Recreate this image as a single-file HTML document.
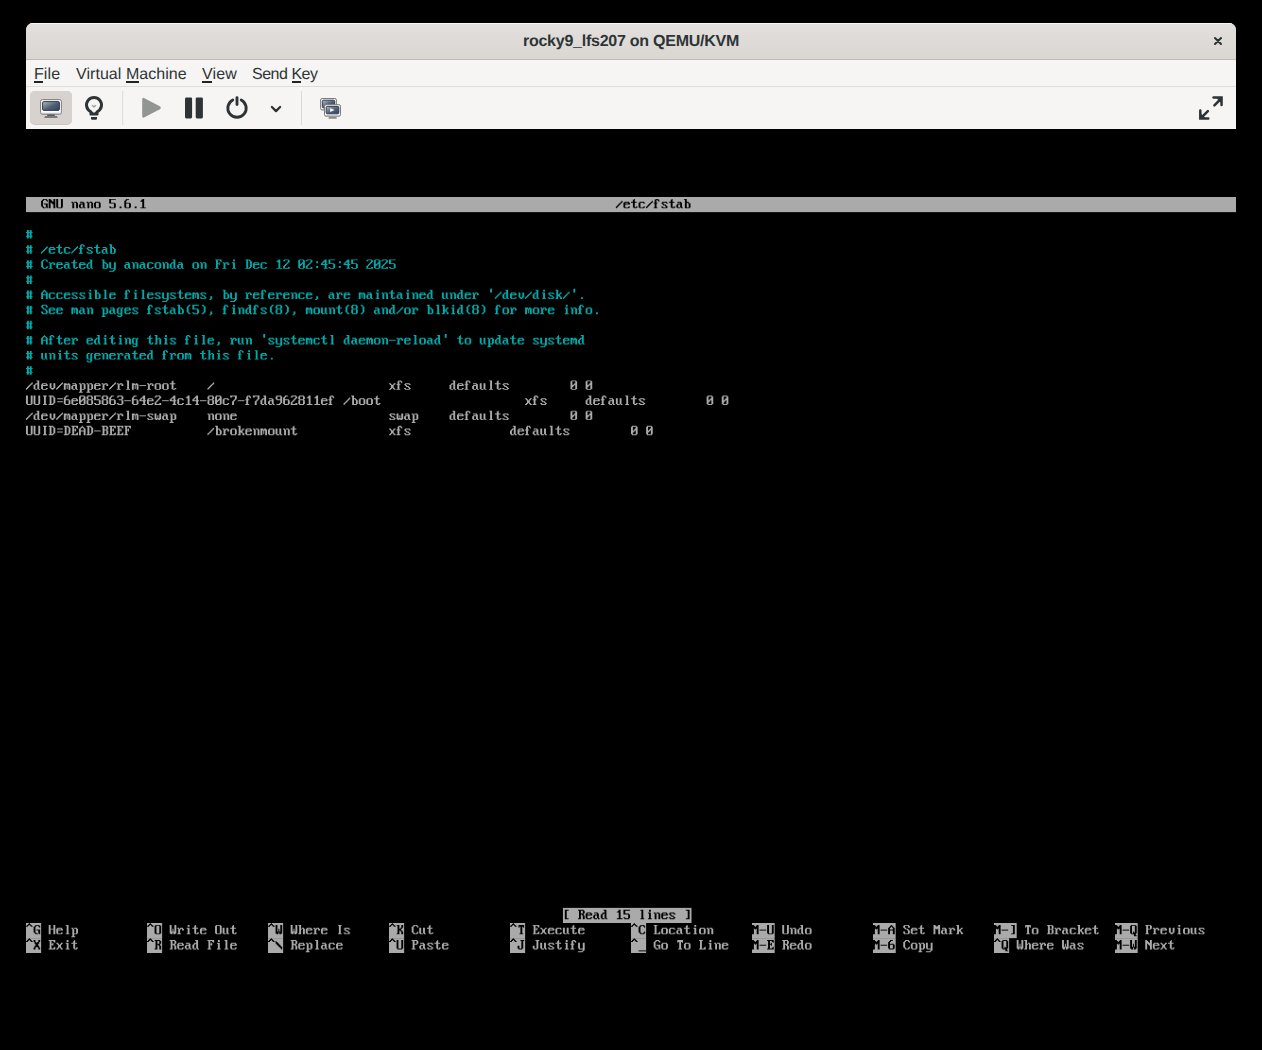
<!DOCTYPE html>
<html><head><meta charset="utf-8">
<style>
html,body{margin:0;padding:0;background:#000;width:1262px;height:1050px;overflow:hidden;}
body{position:relative;font-family:"Liberation Sans",sans-serif;}
.win{position:absolute;left:26px;top:23px;width:1210px;height:106px;background:#f6f5f4;border-radius:7px 7px 0 0;overflow:hidden;}
.title{position:absolute;left:0;top:0;width:1210px;height:36px;background:linear-gradient(#e2dfdc,#dad7d3);border-bottom:1px solid #bfbab3;box-shadow:inset 0 1px rgba(255,255,255,0.75);}
.title .t{position:absolute;left:0;width:1210px;top:10px;text-align:center;font-weight:bold;font-size:16px;text-rendering:geometricPrecision;letter-spacing:-0.25px;color:#2e3436;}
.menu{position:absolute;left:0;top:37px;width:1210px;height:26px;border-bottom:1px solid #dedcd9;}
.menu span{position:absolute;top:6px;font-size:16px;text-rendering:geometricPrecision;color:#2e3436;white-space:nowrap;}
#term{position:absolute;left:26px;top:197px;}
</style></head><body>
<div class="win">
  <div class="title"><div class="t">rocky9_lfs207 on QEMU/KVM</div>
  </div>
  <div class="menu">
    <span style="left:8px;letter-spacing:0.1px">File</span>
    <span style="left:50px;letter-spacing:0.05px">Virtual Machine</span>
    <span style="left:176px;letter-spacing:0.1px">View</span>
    <span style="left:226px;letter-spacing:-0.48px">Send Key</span>
  </div>
</div>
<svg id="term" width="1210" height="756.25" viewBox="0 0 1280 800"><defs><path id="g35" d="M1 3h2v1h-2zM4 3h2v1h-2zM1 4h2v1h-2zM4 4h2v1h-2zM0 5h7v1h-7zM1 6h2v1h-2zM4 6h2v1h-2zM1 7h2v1h-2zM4 7h2v1h-2zM1 8h2v1h-2zM4 8h2v1h-2zM0 9h7v1h-7zM1 10h2v1h-2zM4 10h2v1h-2zM1 11h2v1h-2zM4 11h2v1h-2z"/><path id="g39" d="M3 1h2v1h-2zM3 2h2v1h-2zM3 3h2v1h-2zM3 4h2v1h-2z"/><path id="g40" d="M4 2h2v1h-2zM3 3h2v1h-2zM2 4h2v1h-2zM2 5h2v1h-2zM2 6h2v1h-2zM2 7h2v1h-2zM2 8h2v1h-2zM2 9h2v1h-2zM3 10h2v1h-2zM4 11h2v1h-2z"/><path id="g41" d="M2 2h2v1h-2zM3 3h2v1h-2zM4 4h2v1h-2zM4 5h2v1h-2zM4 6h2v1h-2zM4 7h2v1h-2zM4 8h2v1h-2zM4 9h2v1h-2zM3 10h2v1h-2zM2 11h2v1h-2z"/><path id="g44" d="M3 9h2v1h-2zM3 10h2v1h-2zM3 11h2v1h-2zM2 12h2v1h-2z"/><path id="g45" d="M0 7h7v1h-7z"/><path id="g46" d="M3 10h2v1h-2zM3 11h2v1h-2z"/><path id="g47" d="M6 4h1v1h-1zM5 5h2v1h-2zM4 6h2v1h-2zM3 7h2v1h-2zM2 8h2v1h-2zM1 9h2v1h-2zM0 10h2v1h-2zM0 11h1v1h-1z"/><path id="g48" d="M1 2h5v1h-5zM0 3h2v1h-2zM5 3h2v1h-2zM0 4h2v1h-2zM5 4h2v1h-2zM0 5h2v1h-2zM4 5h3v1h-3zM0 6h2v1h-2zM3 6h4v1h-4zM0 7h4v1h-4zM5 7h2v1h-2zM0 8h3v1h-3zM5 8h2v1h-2zM0 9h2v1h-2zM5 9h2v1h-2zM0 10h2v1h-2zM5 10h2v1h-2zM1 11h5v1h-5z"/><path id="g49" d="M3 2h2v1h-2zM2 3h3v1h-3zM1 4h4v1h-4zM3 5h2v1h-2zM3 6h2v1h-2zM3 7h2v1h-2zM3 8h2v1h-2zM3 9h2v1h-2zM3 10h2v1h-2zM1 11h6v1h-6z"/><path id="g50" d="M1 2h5v1h-5zM0 3h2v1h-2zM5 3h2v1h-2zM5 4h2v1h-2zM4 5h2v1h-2zM3 6h2v1h-2zM2 7h2v1h-2zM1 8h2v1h-2zM0 9h2v1h-2zM0 10h2v1h-2zM5 10h2v1h-2zM0 11h7v1h-7z"/><path id="g51" d="M1 2h5v1h-5zM0 3h2v1h-2zM5 3h2v1h-2zM5 4h2v1h-2zM5 5h2v1h-2zM2 6h4v1h-4zM5 7h2v1h-2zM5 8h2v1h-2zM5 9h2v1h-2zM0 10h2v1h-2zM5 10h2v1h-2zM1 11h5v1h-5z"/><path id="g52" d="M4 2h2v1h-2zM3 3h3v1h-3zM2 4h4v1h-4zM1 5h2v1h-2zM4 5h2v1h-2zM0 6h2v1h-2zM4 6h2v1h-2zM0 7h7v1h-7zM4 8h2v1h-2zM4 9h2v1h-2zM4 10h2v1h-2zM3 11h4v1h-4z"/><path id="g53" d="M0 2h7v1h-7zM0 3h2v1h-2zM0 4h2v1h-2zM0 5h2v1h-2zM0 6h6v1h-6zM5 7h2v1h-2zM5 8h2v1h-2zM5 9h2v1h-2zM0 10h2v1h-2zM5 10h2v1h-2zM1 11h5v1h-5z"/><path id="g54" d="M2 2h3v1h-3zM1 3h2v1h-2zM0 4h2v1h-2zM0 5h2v1h-2zM0 6h6v1h-6zM0 7h2v1h-2zM5 7h2v1h-2zM0 8h2v1h-2zM5 8h2v1h-2zM0 9h2v1h-2zM5 9h2v1h-2zM0 10h2v1h-2zM5 10h2v1h-2zM1 11h5v1h-5z"/><path id="g55" d="M0 2h7v1h-7zM0 3h2v1h-2zM5 3h2v1h-2zM5 4h2v1h-2zM5 5h2v1h-2zM4 6h2v1h-2zM3 7h2v1h-2zM2 8h2v1h-2zM2 9h2v1h-2zM2 10h2v1h-2zM2 11h2v1h-2z"/><path id="g56" d="M1 2h5v1h-5zM0 3h2v1h-2zM5 3h2v1h-2zM0 4h2v1h-2zM5 4h2v1h-2zM0 5h2v1h-2zM5 5h2v1h-2zM1 6h5v1h-5zM0 7h2v1h-2zM5 7h2v1h-2zM0 8h2v1h-2zM5 8h2v1h-2zM0 9h2v1h-2zM5 9h2v1h-2zM0 10h2v1h-2zM5 10h2v1h-2zM1 11h5v1h-5z"/><path id="g57" d="M1 2h5v1h-5zM0 3h2v1h-2zM5 3h2v1h-2zM0 4h2v1h-2zM5 4h2v1h-2zM0 5h2v1h-2zM5 5h2v1h-2zM1 6h6v1h-6zM5 7h2v1h-2zM5 8h2v1h-2zM5 9h2v1h-2zM4 10h2v1h-2zM1 11h4v1h-4z"/><path id="g58" d="M3 4h2v1h-2zM3 5h2v1h-2zM3 9h2v1h-2zM3 10h2v1h-2z"/><path id="g61" d="M1 5h6v1h-6zM1 8h6v1h-6z"/><path id="g65" d="M3 2h1v1h-1zM2 3h3v1h-3zM1 4h2v1h-2zM4 4h2v1h-2zM0 5h2v1h-2zM5 5h2v1h-2zM0 6h2v1h-2zM5 6h2v1h-2zM0 7h7v1h-7zM0 8h2v1h-2zM5 8h2v1h-2zM0 9h2v1h-2zM5 9h2v1h-2zM0 10h2v1h-2zM5 10h2v1h-2zM0 11h2v1h-2zM5 11h2v1h-2z"/><path id="g66" d="M0 2h6v1h-6zM1 3h2v1h-2zM5 3h2v1h-2zM1 4h2v1h-2zM5 4h2v1h-2zM1 5h2v1h-2zM5 5h2v1h-2zM1 6h5v1h-5zM1 7h2v1h-2zM5 7h2v1h-2zM1 8h2v1h-2zM5 8h2v1h-2zM1 9h2v1h-2zM5 9h2v1h-2zM1 10h2v1h-2zM5 10h2v1h-2zM0 11h6v1h-6z"/><path id="g67" d="M2 2h4v1h-4zM1 3h2v1h-2zM5 3h2v1h-2zM0 4h2v1h-2zM6 4h1v1h-1zM0 5h2v1h-2zM0 6h2v1h-2zM0 7h2v1h-2zM0 8h2v1h-2zM0 9h2v1h-2zM6 9h1v1h-1zM1 10h2v1h-2zM5 10h2v1h-2zM2 11h4v1h-4z"/><path id="g68" d="M0 2h5v1h-5zM1 3h2v1h-2zM4 3h2v1h-2zM1 4h2v1h-2zM5 4h2v1h-2zM1 5h2v1h-2zM5 5h2v1h-2zM1 6h2v1h-2zM5 6h2v1h-2zM1 7h2v1h-2zM5 7h2v1h-2zM1 8h2v1h-2zM5 8h2v1h-2zM1 9h2v1h-2zM5 9h2v1h-2zM1 10h2v1h-2zM4 10h2v1h-2zM0 11h5v1h-5z"/><path id="g69" d="M0 2h7v1h-7zM1 3h2v1h-2zM5 3h2v1h-2zM1 4h2v1h-2zM6 4h1v1h-1zM1 5h2v1h-2zM4 5h1v1h-1zM1 6h4v1h-4zM1 7h2v1h-2zM4 7h1v1h-1zM1 8h2v1h-2zM1 9h2v1h-2zM6 9h1v1h-1zM1 10h2v1h-2zM5 10h2v1h-2zM0 11h7v1h-7z"/><path id="g70" d="M0 2h7v1h-7zM1 3h2v1h-2zM5 3h2v1h-2zM1 4h2v1h-2zM6 4h1v1h-1zM1 5h2v1h-2zM4 5h1v1h-1zM1 6h4v1h-4zM1 7h2v1h-2zM4 7h1v1h-1zM1 8h2v1h-2zM1 9h2v1h-2zM1 10h2v1h-2zM0 11h4v1h-4z"/><path id="g71" d="M2 2h4v1h-4zM1 3h2v1h-2zM5 3h2v1h-2zM0 4h2v1h-2zM6 4h1v1h-1zM0 5h2v1h-2zM0 6h2v1h-2zM0 7h2v1h-2zM3 7h4v1h-4zM0 8h2v1h-2zM5 8h2v1h-2zM0 9h2v1h-2zM5 9h2v1h-2zM1 10h2v1h-2zM5 10h2v1h-2zM2 11h3v1h-3zM6 11h1v1h-1z"/><path id="g72" d="M0 2h2v1h-2zM5 2h2v1h-2zM0 3h2v1h-2zM5 3h2v1h-2zM0 4h2v1h-2zM5 4h2v1h-2zM0 5h2v1h-2zM5 5h2v1h-2zM0 6h7v1h-7zM0 7h2v1h-2zM5 7h2v1h-2zM0 8h2v1h-2zM5 8h2v1h-2zM0 9h2v1h-2zM5 9h2v1h-2zM0 10h2v1h-2zM5 10h2v1h-2zM0 11h2v1h-2zM5 11h2v1h-2z"/><path id="g73" d="M2 2h4v1h-4zM3 3h2v1h-2zM3 4h2v1h-2zM3 5h2v1h-2zM3 6h2v1h-2zM3 7h2v1h-2zM3 8h2v1h-2zM3 9h2v1h-2zM3 10h2v1h-2zM2 11h4v1h-4z"/><path id="g74" d="M3 2h4v1h-4zM4 3h2v1h-2zM4 4h2v1h-2zM4 5h2v1h-2zM4 6h2v1h-2zM4 7h2v1h-2zM0 8h2v1h-2zM4 8h2v1h-2zM0 9h2v1h-2zM4 9h2v1h-2zM0 10h2v1h-2zM4 10h2v1h-2zM1 11h4v1h-4z"/><path id="g75" d="M0 2h3v1h-3zM5 2h2v1h-2zM1 3h2v1h-2zM5 3h2v1h-2zM1 4h2v1h-2zM5 4h2v1h-2zM1 5h2v1h-2zM4 5h2v1h-2zM1 6h4v1h-4zM1 7h4v1h-4zM1 8h2v1h-2zM4 8h2v1h-2zM1 9h2v1h-2zM5 9h2v1h-2zM1 10h2v1h-2zM5 10h2v1h-2zM0 11h3v1h-3zM5 11h2v1h-2z"/><path id="g76" d="M0 2h4v1h-4zM1 3h2v1h-2zM1 4h2v1h-2zM1 5h2v1h-2zM1 6h2v1h-2zM1 7h2v1h-2zM1 8h2v1h-2zM1 9h2v1h-2zM6 9h1v1h-1zM1 10h2v1h-2zM5 10h2v1h-2zM0 11h7v1h-7z"/><path id="g77" d="M0 2h2v1h-2zM5 2h2v1h-2zM0 3h3v1h-3zM4 3h3v1h-3zM0 4h7v1h-7zM0 5h7v1h-7zM0 6h2v1h-2zM3 6h1v1h-1zM5 6h2v1h-2zM0 7h2v1h-2zM5 7h2v1h-2zM0 8h2v1h-2zM5 8h2v1h-2zM0 9h2v1h-2zM5 9h2v1h-2zM0 10h2v1h-2zM5 10h2v1h-2zM0 11h2v1h-2zM5 11h2v1h-2z"/><path id="g78" d="M0 2h2v1h-2zM5 2h2v1h-2zM0 3h3v1h-3zM5 3h2v1h-2zM0 4h4v1h-4zM5 4h2v1h-2zM0 5h7v1h-7zM0 6h2v1h-2zM3 6h4v1h-4zM0 7h2v1h-2zM4 7h3v1h-3zM0 8h2v1h-2zM5 8h2v1h-2zM0 9h2v1h-2zM5 9h2v1h-2zM0 10h2v1h-2zM5 10h2v1h-2zM0 11h2v1h-2zM5 11h2v1h-2z"/><path id="g79" d="M1 2h5v1h-5zM0 3h2v1h-2zM5 3h2v1h-2zM0 4h2v1h-2zM5 4h2v1h-2zM0 5h2v1h-2zM5 5h2v1h-2zM0 6h2v1h-2zM5 6h2v1h-2zM0 7h2v1h-2zM5 7h2v1h-2zM0 8h2v1h-2zM5 8h2v1h-2zM0 9h2v1h-2zM5 9h2v1h-2zM0 10h2v1h-2zM5 10h2v1h-2zM1 11h5v1h-5z"/><path id="g80" d="M0 2h6v1h-6zM1 3h2v1h-2zM5 3h2v1h-2zM1 4h2v1h-2zM5 4h2v1h-2zM1 5h2v1h-2zM5 5h2v1h-2zM1 6h5v1h-5zM1 7h2v1h-2zM1 8h2v1h-2zM1 9h2v1h-2zM1 10h2v1h-2zM0 11h4v1h-4z"/><path id="g81" d="M1 2h5v1h-5zM0 3h2v1h-2zM5 3h2v1h-2zM0 4h2v1h-2zM5 4h2v1h-2zM0 5h2v1h-2zM5 5h2v1h-2zM0 6h2v1h-2zM5 6h2v1h-2zM0 7h2v1h-2zM5 7h2v1h-2zM0 8h2v1h-2zM5 8h2v1h-2zM0 9h2v1h-2zM3 9h1v1h-1zM5 9h2v1h-2zM0 10h2v1h-2zM3 10h4v1h-4zM1 11h5v1h-5zM4 12h2v1h-2zM4 13h3v1h-3z"/><path id="g82" d="M0 2h6v1h-6zM1 3h2v1h-2zM5 3h2v1h-2zM1 4h2v1h-2zM5 4h2v1h-2zM1 5h2v1h-2zM5 5h2v1h-2zM1 6h5v1h-5zM1 7h2v1h-2zM4 7h2v1h-2zM1 8h2v1h-2zM5 8h2v1h-2zM1 9h2v1h-2zM5 9h2v1h-2zM1 10h2v1h-2zM5 10h2v1h-2zM0 11h3v1h-3zM5 11h2v1h-2z"/><path id="g83" d="M1 2h5v1h-5zM0 3h2v1h-2zM5 3h2v1h-2zM0 4h2v1h-2zM5 4h2v1h-2zM1 5h2v1h-2zM2 6h3v1h-3zM4 7h2v1h-2zM5 8h2v1h-2zM0 9h2v1h-2zM5 9h2v1h-2zM0 10h2v1h-2zM5 10h2v1h-2zM1 11h5v1h-5z"/><path id="g84" d="M1 2h6v1h-6zM1 3h6v1h-6zM1 4h1v1h-1zM3 4h2v1h-2zM6 4h1v1h-1zM3 5h2v1h-2zM3 6h2v1h-2zM3 7h2v1h-2zM3 8h2v1h-2zM3 9h2v1h-2zM3 10h2v1h-2zM2 11h4v1h-4z"/><path id="g85" d="M0 2h2v1h-2zM5 2h2v1h-2zM0 3h2v1h-2zM5 3h2v1h-2zM0 4h2v1h-2zM5 4h2v1h-2zM0 5h2v1h-2zM5 5h2v1h-2zM0 6h2v1h-2zM5 6h2v1h-2zM0 7h2v1h-2zM5 7h2v1h-2zM0 8h2v1h-2zM5 8h2v1h-2zM0 9h2v1h-2zM5 9h2v1h-2zM0 10h2v1h-2zM5 10h2v1h-2zM1 11h5v1h-5z"/><path id="g87" d="M0 2h2v1h-2zM5 2h2v1h-2zM0 3h2v1h-2zM5 3h2v1h-2zM0 4h2v1h-2zM5 4h2v1h-2zM0 5h2v1h-2zM5 5h2v1h-2zM0 6h2v1h-2zM3 6h1v1h-1zM5 6h2v1h-2zM0 7h2v1h-2zM3 7h1v1h-1zM5 7h2v1h-2zM0 8h2v1h-2zM3 8h1v1h-1zM5 8h2v1h-2zM0 9h7v1h-7zM0 10h3v1h-3zM4 10h3v1h-3zM1 11h2v1h-2zM4 11h2v1h-2z"/><path id="g88" d="M0 2h2v1h-2zM5 2h2v1h-2zM0 3h2v1h-2zM5 3h2v1h-2zM1 4h2v1h-2zM4 4h2v1h-2zM1 5h5v1h-5zM2 6h3v1h-3zM2 7h3v1h-3zM1 8h5v1h-5zM1 9h2v1h-2zM4 9h2v1h-2zM0 10h2v1h-2zM5 10h2v1h-2zM0 11h2v1h-2zM5 11h2v1h-2z"/><path id="g91" d="M2 2h4v1h-4zM2 3h2v1h-2zM2 4h2v1h-2zM2 5h2v1h-2zM2 6h2v1h-2zM2 7h2v1h-2zM2 8h2v1h-2zM2 9h2v1h-2zM2 10h2v1h-2zM2 11h4v1h-4z"/><path id="g92" d="M0 3h1v1h-1zM0 4h2v1h-2zM0 5h3v1h-3zM1 6h3v1h-3zM2 7h3v1h-3zM3 8h3v1h-3zM4 9h3v1h-3zM5 10h2v1h-2zM6 11h1v1h-1z"/><path id="g93" d="M2 2h4v1h-4zM4 3h2v1h-2zM4 4h2v1h-2zM4 5h2v1h-2zM4 6h2v1h-2zM4 7h2v1h-2zM4 8h2v1h-2zM4 9h2v1h-2zM4 10h2v1h-2zM2 11h4v1h-4z"/><path id="g94" d="M3 0h1v1h-1zM2 1h3v1h-3zM1 2h2v1h-2zM4 2h2v1h-2zM0 3h2v1h-2zM5 3h2v1h-2z"/><path id="g95" d="M0 13h8v1h-8z"/><path id="g97" d="M1 5h4v1h-4zM4 6h2v1h-2zM1 7h5v1h-5zM0 8h2v1h-2zM4 8h2v1h-2zM0 9h2v1h-2zM4 9h2v1h-2zM0 10h2v1h-2zM4 10h2v1h-2zM1 11h3v1h-3zM5 11h2v1h-2z"/><path id="g98" d="M0 2h3v1h-3zM1 3h2v1h-2zM1 4h2v1h-2zM1 5h4v1h-4zM1 6h2v1h-2zM4 6h2v1h-2zM1 7h2v1h-2zM5 7h2v1h-2zM1 8h2v1h-2zM5 8h2v1h-2zM1 9h2v1h-2zM5 9h2v1h-2zM1 10h2v1h-2zM5 10h2v1h-2zM1 11h5v1h-5z"/><path id="g99" d="M1 5h5v1h-5zM0 6h2v1h-2zM5 6h2v1h-2zM0 7h2v1h-2zM0 8h2v1h-2zM0 9h2v1h-2zM0 10h2v1h-2zM5 10h2v1h-2zM1 11h5v1h-5z"/><path id="g100" d="M3 2h3v1h-3zM4 3h2v1h-2zM4 4h2v1h-2zM2 5h4v1h-4zM1 6h2v1h-2zM4 6h2v1h-2zM0 7h2v1h-2zM4 7h2v1h-2zM0 8h2v1h-2zM4 8h2v1h-2zM0 9h2v1h-2zM4 9h2v1h-2zM0 10h2v1h-2zM4 10h2v1h-2zM1 11h3v1h-3zM5 11h2v1h-2z"/><path id="g101" d="M1 5h5v1h-5zM0 6h2v1h-2zM5 6h2v1h-2zM0 7h7v1h-7zM0 8h2v1h-2zM0 9h2v1h-2zM0 10h2v1h-2zM5 10h2v1h-2zM1 11h5v1h-5z"/><path id="g102" d="M2 2h3v1h-3zM1 3h2v1h-2zM4 3h2v1h-2zM1 4h2v1h-2zM5 4h1v1h-1zM1 5h2v1h-2zM0 6h4v1h-4zM1 7h2v1h-2zM1 8h2v1h-2zM1 9h2v1h-2zM1 10h2v1h-2zM0 11h4v1h-4z"/><path id="g103" d="M1 5h3v1h-3zM5 5h2v1h-2zM0 6h2v1h-2zM4 6h2v1h-2zM0 7h2v1h-2zM4 7h2v1h-2zM0 8h2v1h-2zM4 8h2v1h-2zM0 9h2v1h-2zM4 9h2v1h-2zM0 10h2v1h-2zM4 10h2v1h-2zM1 11h5v1h-5zM4 12h2v1h-2zM0 13h2v1h-2zM4 13h2v1h-2zM1 14h4v1h-4z"/><path id="g104" d="M0 2h3v1h-3zM1 3h2v1h-2zM1 4h2v1h-2zM1 5h2v1h-2zM4 5h2v1h-2zM1 6h3v1h-3zM5 6h2v1h-2zM1 7h2v1h-2zM5 7h2v1h-2zM1 8h2v1h-2zM5 8h2v1h-2zM1 9h2v1h-2zM5 9h2v1h-2zM1 10h2v1h-2zM5 10h2v1h-2zM0 11h3v1h-3zM5 11h2v1h-2z"/><path id="g105" d="M3 2h2v1h-2zM3 3h2v1h-2zM2 5h3v1h-3zM3 6h2v1h-2zM3 7h2v1h-2zM3 8h2v1h-2zM3 9h2v1h-2zM3 10h2v1h-2zM2 11h4v1h-4z"/><path id="g107" d="M0 2h3v1h-3zM1 3h2v1h-2zM1 4h2v1h-2zM1 5h2v1h-2zM5 5h2v1h-2zM1 6h2v1h-2zM4 6h2v1h-2zM1 7h4v1h-4zM1 8h4v1h-4zM1 9h2v1h-2zM4 9h2v1h-2zM1 10h2v1h-2zM5 10h2v1h-2zM0 11h3v1h-3zM5 11h2v1h-2z"/><path id="g108" d="M2 2h3v1h-3zM3 3h2v1h-2zM3 4h2v1h-2zM3 5h2v1h-2zM3 6h2v1h-2zM3 7h2v1h-2zM3 8h2v1h-2zM3 9h2v1h-2zM3 10h2v1h-2zM2 11h4v1h-4z"/><path id="g109" d="M0 5h3v1h-3zM4 5h2v1h-2zM0 6h7v1h-7zM0 7h2v1h-2zM3 7h1v1h-1zM5 7h2v1h-2zM0 8h2v1h-2zM3 8h1v1h-1zM5 8h2v1h-2zM0 9h2v1h-2zM3 9h1v1h-1zM5 9h2v1h-2zM0 10h2v1h-2zM3 10h1v1h-1zM5 10h2v1h-2zM0 11h2v1h-2zM5 11h2v1h-2z"/><path id="g110" d="M0 5h2v1h-2zM3 5h3v1h-3zM1 6h2v1h-2zM5 6h2v1h-2zM1 7h2v1h-2zM5 7h2v1h-2zM1 8h2v1h-2zM5 8h2v1h-2zM1 9h2v1h-2zM5 9h2v1h-2zM1 10h2v1h-2zM5 10h2v1h-2zM1 11h2v1h-2zM5 11h2v1h-2z"/><path id="g111" d="M1 5h5v1h-5zM0 6h2v1h-2zM5 6h2v1h-2zM0 7h2v1h-2zM5 7h2v1h-2zM0 8h2v1h-2zM5 8h2v1h-2zM0 9h2v1h-2zM5 9h2v1h-2zM0 10h2v1h-2zM5 10h2v1h-2zM1 11h5v1h-5z"/><path id="g112" d="M0 5h2v1h-2zM3 5h3v1h-3zM1 6h2v1h-2zM5 6h2v1h-2zM1 7h2v1h-2zM5 7h2v1h-2zM1 8h2v1h-2zM5 8h2v1h-2zM1 9h2v1h-2zM5 9h2v1h-2zM1 10h2v1h-2zM5 10h2v1h-2zM1 11h5v1h-5zM1 12h2v1h-2zM1 13h2v1h-2zM0 14h4v1h-4z"/><path id="g114" d="M0 5h2v1h-2zM3 5h3v1h-3zM1 6h3v1h-3zM5 6h2v1h-2zM1 7h2v1h-2zM5 7h2v1h-2zM1 8h2v1h-2zM1 9h2v1h-2zM1 10h2v1h-2zM0 11h4v1h-4z"/><path id="g115" d="M1 5h5v1h-5zM0 6h2v1h-2zM5 6h2v1h-2zM1 7h2v1h-2zM2 8h3v1h-3zM4 9h2v1h-2zM0 10h2v1h-2zM5 10h2v1h-2zM1 11h5v1h-5z"/><path id="g116" d="M3 2h1v1h-1zM2 3h2v1h-2zM2 4h2v1h-2zM0 5h6v1h-6zM2 6h2v1h-2zM2 7h2v1h-2zM2 8h2v1h-2zM2 9h2v1h-2zM2 10h2v1h-2zM5 10h2v1h-2zM3 11h3v1h-3z"/><path id="g117" d="M0 5h2v1h-2zM4 5h2v1h-2zM0 6h2v1h-2zM4 6h2v1h-2zM0 7h2v1h-2zM4 7h2v1h-2zM0 8h2v1h-2zM4 8h2v1h-2zM0 9h2v1h-2zM4 9h2v1h-2zM0 10h2v1h-2zM4 10h2v1h-2zM1 11h3v1h-3zM5 11h2v1h-2z"/><path id="g118" d="M1 5h2v1h-2zM5 5h2v1h-2zM1 6h2v1h-2zM5 6h2v1h-2zM1 7h2v1h-2zM5 7h2v1h-2zM1 8h2v1h-2zM5 8h2v1h-2zM1 9h2v1h-2zM5 9h2v1h-2zM2 10h4v1h-4zM3 11h2v1h-2z"/><path id="g119" d="M0 5h2v1h-2zM5 5h2v1h-2zM0 6h2v1h-2zM5 6h2v1h-2zM0 7h2v1h-2zM3 7h1v1h-1zM5 7h2v1h-2zM0 8h2v1h-2zM3 8h1v1h-1zM5 8h2v1h-2zM0 9h2v1h-2zM3 9h1v1h-1zM5 9h2v1h-2zM0 10h7v1h-7zM1 11h2v1h-2zM4 11h2v1h-2z"/><path id="g120" d="M0 5h2v1h-2zM5 5h2v1h-2zM1 6h2v1h-2zM4 6h2v1h-2zM2 7h3v1h-3zM2 8h3v1h-3zM2 9h3v1h-3zM1 10h2v1h-2zM4 10h2v1h-2zM0 11h2v1h-2zM5 11h2v1h-2z"/><path id="g121" d="M0 5h2v1h-2zM5 5h2v1h-2zM0 6h2v1h-2zM5 6h2v1h-2zM0 7h2v1h-2zM5 7h2v1h-2zM0 8h2v1h-2zM5 8h2v1h-2zM0 9h2v1h-2zM5 9h2v1h-2zM0 10h2v1h-2zM5 10h2v1h-2zM1 11h6v1h-6zM5 12h2v1h-2zM4 13h2v1h-2zM0 14h5v1h-5z"/></defs><rect x="0" y="0" width="1280" height="16" fill="#aaaaaa"/><rect x="568" y="752" width="136" height="16" fill="#aaaaaa"/><rect x="0" y="768" width="16" height="16" fill="#aaaaaa"/><rect x="128" y="768" width="16" height="16" fill="#aaaaaa"/><rect x="256" y="768" width="16" height="16" fill="#aaaaaa"/><rect x="384" y="768" width="16" height="16" fill="#aaaaaa"/><rect x="512" y="768" width="16" height="16" fill="#aaaaaa"/><rect x="640" y="768" width="16" height="16" fill="#aaaaaa"/><rect x="768" y="768" width="24" height="16" fill="#aaaaaa"/><rect x="896" y="768" width="24" height="16" fill="#aaaaaa"/><rect x="1024" y="768" width="24" height="16" fill="#aaaaaa"/><rect x="1152" y="768" width="24" height="16" fill="#aaaaaa"/><rect x="0" y="784" width="16" height="16" fill="#aaaaaa"/><rect x="128" y="784" width="16" height="16" fill="#aaaaaa"/><rect x="256" y="784" width="16" height="16" fill="#aaaaaa"/><rect x="384" y="784" width="16" height="16" fill="#aaaaaa"/><rect x="512" y="784" width="16" height="16" fill="#aaaaaa"/><rect x="640" y="784" width="16" height="16" fill="#aaaaaa"/><rect x="768" y="784" width="24" height="16" fill="#aaaaaa"/><rect x="896" y="784" width="24" height="16" fill="#aaaaaa"/><rect x="1024" y="784" width="16" height="16" fill="#aaaaaa"/><rect x="1152" y="784" width="24" height="16" fill="#aaaaaa"/><g fill="#000000"><use href="#g71" x="16" y="0"/><use href="#g78" x="24" y="0"/><use href="#g85" x="32" y="0"/><use href="#g110" x="48" y="0"/><use href="#g97" x="56" y="0"/><use href="#g110" x="64" y="0"/><use href="#g111" x="72" y="0"/><use href="#g53" x="88" y="0"/><use href="#g46" x="96" y="0"/><use href="#g54" x="104" y="0"/><use href="#g46" x="112" y="0"/><use href="#g49" x="120" y="0"/><use href="#g47" x="624" y="0"/><use href="#g101" x="632" y="0"/><use href="#g116" x="640" y="0"/><use href="#g99" x="648" y="0"/><use href="#g47" x="656" y="0"/><use href="#g102" x="664" y="0"/><use href="#g115" x="672" y="0"/><use href="#g116" x="680" y="0"/><use href="#g97" x="688" y="0"/><use href="#g98" x="696" y="0"/><use href="#g91" x="568" y="752"/><use href="#g82" x="584" y="752"/><use href="#g101" x="592" y="752"/><use href="#g97" x="600" y="752"/><use href="#g100" x="608" y="752"/><use href="#g49" x="624" y="752"/><use href="#g53" x="632" y="752"/><use href="#g108" x="648" y="752"/><use href="#g105" x="656" y="752"/><use href="#g110" x="664" y="752"/><use href="#g101" x="672" y="752"/><use href="#g115" x="680" y="752"/><use href="#g93" x="696" y="752"/><use href="#g94" x="0" y="768"/><use href="#g71" x="8" y="768"/><use href="#g94" x="128" y="768"/><use href="#g79" x="136" y="768"/><use href="#g94" x="256" y="768"/><use href="#g87" x="264" y="768"/><use href="#g94" x="384" y="768"/><use href="#g75" x="392" y="768"/><use href="#g94" x="512" y="768"/><use href="#g84" x="520" y="768"/><use href="#g94" x="640" y="768"/><use href="#g67" x="648" y="768"/><use href="#g77" x="768" y="768"/><use href="#g45" x="776" y="768"/><use href="#g85" x="784" y="768"/><use href="#g77" x="896" y="768"/><use href="#g45" x="904" y="768"/><use href="#g65" x="912" y="768"/><use href="#g77" x="1024" y="768"/><use href="#g45" x="1032" y="768"/><use href="#g93" x="1040" y="768"/><use href="#g77" x="1152" y="768"/><use href="#g45" x="1160" y="768"/><use href="#g81" x="1168" y="768"/><use href="#g94" x="0" y="784"/><use href="#g88" x="8" y="784"/><use href="#g94" x="128" y="784"/><use href="#g82" x="136" y="784"/><use href="#g94" x="256" y="784"/><use href="#g92" x="264" y="784"/><use href="#g94" x="384" y="784"/><use href="#g85" x="392" y="784"/><use href="#g94" x="512" y="784"/><use href="#g74" x="520" y="784"/><use href="#g94" x="640" y="784"/><use href="#g95" x="648" y="784"/><use href="#g77" x="768" y="784"/><use href="#g45" x="776" y="784"/><use href="#g69" x="784" y="784"/><use href="#g77" x="896" y="784"/><use href="#g45" x="904" y="784"/><use href="#g54" x="912" y="784"/><use href="#g94" x="1024" y="784"/><use href="#g81" x="1032" y="784"/><use href="#g77" x="1152" y="784"/><use href="#g45" x="1160" y="784"/><use href="#g87" x="1168" y="784"/></g><g fill="#00aaaa"><use href="#g35" x="0" y="32"/><use href="#g35" x="0" y="48"/><use href="#g47" x="16" y="48"/><use href="#g101" x="24" y="48"/><use href="#g116" x="32" y="48"/><use href="#g99" x="40" y="48"/><use href="#g47" x="48" y="48"/><use href="#g102" x="56" y="48"/><use href="#g115" x="64" y="48"/><use href="#g116" x="72" y="48"/><use href="#g97" x="80" y="48"/><use href="#g98" x="88" y="48"/><use href="#g35" x="0" y="64"/><use href="#g67" x="16" y="64"/><use href="#g114" x="24" y="64"/><use href="#g101" x="32" y="64"/><use href="#g97" x="40" y="64"/><use href="#g116" x="48" y="64"/><use href="#g101" x="56" y="64"/><use href="#g100" x="64" y="64"/><use href="#g98" x="80" y="64"/><use href="#g121" x="88" y="64"/><use href="#g97" x="104" y="64"/><use href="#g110" x="112" y="64"/><use href="#g97" x="120" y="64"/><use href="#g99" x="128" y="64"/><use href="#g111" x="136" y="64"/><use href="#g110" x="144" y="64"/><use href="#g100" x="152" y="64"/><use href="#g97" x="160" y="64"/><use href="#g111" x="176" y="64"/><use href="#g110" x="184" y="64"/><use href="#g70" x="200" y="64"/><use href="#g114" x="208" y="64"/><use href="#g105" x="216" y="64"/><use href="#g68" x="232" y="64"/><use href="#g101" x="240" y="64"/><use href="#g99" x="248" y="64"/><use href="#g49" x="264" y="64"/><use href="#g50" x="272" y="64"/><use href="#g48" x="288" y="64"/><use href="#g50" x="296" y="64"/><use href="#g58" x="304" y="64"/><use href="#g52" x="312" y="64"/><use href="#g53" x="320" y="64"/><use href="#g58" x="328" y="64"/><use href="#g52" x="336" y="64"/><use href="#g53" x="344" y="64"/><use href="#g50" x="360" y="64"/><use href="#g48" x="368" y="64"/><use href="#g50" x="376" y="64"/><use href="#g53" x="384" y="64"/><use href="#g35" x="0" y="80"/><use href="#g35" x="0" y="96"/><use href="#g65" x="16" y="96"/><use href="#g99" x="24" y="96"/><use href="#g99" x="32" y="96"/><use href="#g101" x="40" y="96"/><use href="#g115" x="48" y="96"/><use href="#g115" x="56" y="96"/><use href="#g105" x="64" y="96"/><use href="#g98" x="72" y="96"/><use href="#g108" x="80" y="96"/><use href="#g101" x="88" y="96"/><use href="#g102" x="104" y="96"/><use href="#g105" x="112" y="96"/><use href="#g108" x="120" y="96"/><use href="#g101" x="128" y="96"/><use href="#g115" x="136" y="96"/><use href="#g121" x="144" y="96"/><use href="#g115" x="152" y="96"/><use href="#g116" x="160" y="96"/><use href="#g101" x="168" y="96"/><use href="#g109" x="176" y="96"/><use href="#g115" x="184" y="96"/><use href="#g44" x="192" y="96"/><use href="#g98" x="208" y="96"/><use href="#g121" x="216" y="96"/><use href="#g114" x="232" y="96"/><use href="#g101" x="240" y="96"/><use href="#g102" x="248" y="96"/><use href="#g101" x="256" y="96"/><use href="#g114" x="264" y="96"/><use href="#g101" x="272" y="96"/><use href="#g110" x="280" y="96"/><use href="#g99" x="288" y="96"/><use href="#g101" x="296" y="96"/><use href="#g44" x="304" y="96"/><use href="#g97" x="320" y="96"/><use href="#g114" x="328" y="96"/><use href="#g101" x="336" y="96"/><use href="#g109" x="352" y="96"/><use href="#g97" x="360" y="96"/><use href="#g105" x="368" y="96"/><use href="#g110" x="376" y="96"/><use href="#g116" x="384" y="96"/><use href="#g97" x="392" y="96"/><use href="#g105" x="400" y="96"/><use href="#g110" x="408" y="96"/><use href="#g101" x="416" y="96"/><use href="#g100" x="424" y="96"/><use href="#g117" x="440" y="96"/><use href="#g110" x="448" y="96"/><use href="#g100" x="456" y="96"/><use href="#g101" x="464" y="96"/><use href="#g114" x="472" y="96"/><use href="#g39" x="488" y="96"/><use href="#g47" x="496" y="96"/><use href="#g100" x="504" y="96"/><use href="#g101" x="512" y="96"/><use href="#g118" x="520" y="96"/><use href="#g47" x="528" y="96"/><use href="#g100" x="536" y="96"/><use href="#g105" x="544" y="96"/><use href="#g115" x="552" y="96"/><use href="#g107" x="560" y="96"/><use href="#g47" x="568" y="96"/><use href="#g39" x="576" y="96"/><use href="#g46" x="584" y="96"/><use href="#g35" x="0" y="112"/><use href="#g83" x="16" y="112"/><use href="#g101" x="24" y="112"/><use href="#g101" x="32" y="112"/><use href="#g109" x="48" y="112"/><use href="#g97" x="56" y="112"/><use href="#g110" x="64" y="112"/><use href="#g112" x="80" y="112"/><use href="#g97" x="88" y="112"/><use href="#g103" x="96" y="112"/><use href="#g101" x="104" y="112"/><use href="#g115" x="112" y="112"/><use href="#g102" x="128" y="112"/><use href="#g115" x="136" y="112"/><use href="#g116" x="144" y="112"/><use href="#g97" x="152" y="112"/><use href="#g98" x="160" y="112"/><use href="#g40" x="168" y="112"/><use href="#g53" x="176" y="112"/><use href="#g41" x="184" y="112"/><use href="#g44" x="192" y="112"/><use href="#g102" x="208" y="112"/><use href="#g105" x="216" y="112"/><use href="#g110" x="224" y="112"/><use href="#g100" x="232" y="112"/><use href="#g102" x="240" y="112"/><use href="#g115" x="248" y="112"/><use href="#g40" x="256" y="112"/><use href="#g56" x="264" y="112"/><use href="#g41" x="272" y="112"/><use href="#g44" x="280" y="112"/><use href="#g109" x="296" y="112"/><use href="#g111" x="304" y="112"/><use href="#g117" x="312" y="112"/><use href="#g110" x="320" y="112"/><use href="#g116" x="328" y="112"/><use href="#g40" x="336" y="112"/><use href="#g56" x="344" y="112"/><use href="#g41" x="352" y="112"/><use href="#g97" x="368" y="112"/><use href="#g110" x="376" y="112"/><use href="#g100" x="384" y="112"/><use href="#g47" x="392" y="112"/><use href="#g111" x="400" y="112"/><use href="#g114" x="408" y="112"/><use href="#g98" x="424" y="112"/><use href="#g108" x="432" y="112"/><use href="#g107" x="440" y="112"/><use href="#g105" x="448" y="112"/><use href="#g100" x="456" y="112"/><use href="#g40" x="464" y="112"/><use href="#g56" x="472" y="112"/><use href="#g41" x="480" y="112"/><use href="#g102" x="496" y="112"/><use href="#g111" x="504" y="112"/><use href="#g114" x="512" y="112"/><use href="#g109" x="528" y="112"/><use href="#g111" x="536" y="112"/><use href="#g114" x="544" y="112"/><use href="#g101" x="552" y="112"/><use href="#g105" x="568" y="112"/><use href="#g110" x="576" y="112"/><use href="#g102" x="584" y="112"/><use href="#g111" x="592" y="112"/><use href="#g46" x="600" y="112"/><use href="#g35" x="0" y="128"/><use href="#g35" x="0" y="144"/><use href="#g65" x="16" y="144"/><use href="#g102" x="24" y="144"/><use href="#g116" x="32" y="144"/><use href="#g101" x="40" y="144"/><use href="#g114" x="48" y="144"/><use href="#g101" x="64" y="144"/><use href="#g100" x="72" y="144"/><use href="#g105" x="80" y="144"/><use href="#g116" x="88" y="144"/><use href="#g105" x="96" y="144"/><use href="#g110" x="104" y="144"/><use href="#g103" x="112" y="144"/><use href="#g116" x="128" y="144"/><use href="#g104" x="136" y="144"/><use href="#g105" x="144" y="144"/><use href="#g115" x="152" y="144"/><use href="#g102" x="168" y="144"/><use href="#g105" x="176" y="144"/><use href="#g108" x="184" y="144"/><use href="#g101" x="192" y="144"/><use href="#g44" x="200" y="144"/><use href="#g114" x="216" y="144"/><use href="#g117" x="224" y="144"/><use href="#g110" x="232" y="144"/><use href="#g39" x="248" y="144"/><use href="#g115" x="256" y="144"/><use href="#g121" x="264" y="144"/><use href="#g115" x="272" y="144"/><use href="#g116" x="280" y="144"/><use href="#g101" x="288" y="144"/><use href="#g109" x="296" y="144"/><use href="#g99" x="304" y="144"/><use href="#g116" x="312" y="144"/><use href="#g108" x="320" y="144"/><use href="#g100" x="336" y="144"/><use href="#g97" x="344" y="144"/><use href="#g101" x="352" y="144"/><use href="#g109" x="360" y="144"/><use href="#g111" x="368" y="144"/><use href="#g110" x="376" y="144"/><use href="#g45" x="384" y="144"/><use href="#g114" x="392" y="144"/><use href="#g101" x="400" y="144"/><use href="#g108" x="408" y="144"/><use href="#g111" x="416" y="144"/><use href="#g97" x="424" y="144"/><use href="#g100" x="432" y="144"/><use href="#g39" x="440" y="144"/><use href="#g116" x="456" y="144"/><use href="#g111" x="464" y="144"/><use href="#g117" x="480" y="144"/><use href="#g112" x="488" y="144"/><use href="#g100" x="496" y="144"/><use href="#g97" x="504" y="144"/><use href="#g116" x="512" y="144"/><use href="#g101" x="520" y="144"/><use href="#g115" x="536" y="144"/><use href="#g121" x="544" y="144"/><use href="#g115" x="552" y="144"/><use href="#g116" x="560" y="144"/><use href="#g101" x="568" y="144"/><use href="#g109" x="576" y="144"/><use href="#g100" x="584" y="144"/><use href="#g35" x="0" y="160"/><use href="#g117" x="16" y="160"/><use href="#g110" x="24" y="160"/><use href="#g105" x="32" y="160"/><use href="#g116" x="40" y="160"/><use href="#g115" x="48" y="160"/><use href="#g103" x="64" y="160"/><use href="#g101" x="72" y="160"/><use href="#g110" x="80" y="160"/><use href="#g101" x="88" y="160"/><use href="#g114" x="96" y="160"/><use href="#g97" x="104" y="160"/><use href="#g116" x="112" y="160"/><use href="#g101" x="120" y="160"/><use href="#g100" x="128" y="160"/><use href="#g102" x="144" y="160"/><use href="#g114" x="152" y="160"/><use href="#g111" x="160" y="160"/><use href="#g109" x="168" y="160"/><use href="#g116" x="184" y="160"/><use href="#g104" x="192" y="160"/><use href="#g105" x="200" y="160"/><use href="#g115" x="208" y="160"/><use href="#g102" x="224" y="160"/><use href="#g105" x="232" y="160"/><use href="#g108" x="240" y="160"/><use href="#g101" x="248" y="160"/><use href="#g46" x="256" y="160"/><use href="#g35" x="0" y="176"/></g><g fill="#aaaaaa"><use href="#g47" x="0" y="192"/><use href="#g100" x="8" y="192"/><use href="#g101" x="16" y="192"/><use href="#g118" x="24" y="192"/><use href="#g47" x="32" y="192"/><use href="#g109" x="40" y="192"/><use href="#g97" x="48" y="192"/><use href="#g112" x="56" y="192"/><use href="#g112" x="64" y="192"/><use href="#g101" x="72" y="192"/><use href="#g114" x="80" y="192"/><use href="#g47" x="88" y="192"/><use href="#g114" x="96" y="192"/><use href="#g108" x="104" y="192"/><use href="#g109" x="112" y="192"/><use href="#g45" x="120" y="192"/><use href="#g114" x="128" y="192"/><use href="#g111" x="136" y="192"/><use href="#g111" x="144" y="192"/><use href="#g116" x="152" y="192"/><use href="#g47" x="192" y="192"/><use href="#g120" x="384" y="192"/><use href="#g102" x="392" y="192"/><use href="#g115" x="400" y="192"/><use href="#g100" x="448" y="192"/><use href="#g101" x="456" y="192"/><use href="#g102" x="464" y="192"/><use href="#g97" x="472" y="192"/><use href="#g117" x="480" y="192"/><use href="#g108" x="488" y="192"/><use href="#g116" x="496" y="192"/><use href="#g115" x="504" y="192"/><use href="#g48" x="576" y="192"/><use href="#g48" x="592" y="192"/><use href="#g85" x="0" y="208"/><use href="#g85" x="8" y="208"/><use href="#g73" x="16" y="208"/><use href="#g68" x="24" y="208"/><use href="#g61" x="32" y="208"/><use href="#g54" x="40" y="208"/><use href="#g101" x="48" y="208"/><use href="#g48" x="56" y="208"/><use href="#g56" x="64" y="208"/><use href="#g53" x="72" y="208"/><use href="#g56" x="80" y="208"/><use href="#g54" x="88" y="208"/><use href="#g51" x="96" y="208"/><use href="#g45" x="104" y="208"/><use href="#g54" x="112" y="208"/><use href="#g52" x="120" y="208"/><use href="#g101" x="128" y="208"/><use href="#g50" x="136" y="208"/><use href="#g45" x="144" y="208"/><use href="#g52" x="152" y="208"/><use href="#g99" x="160" y="208"/><use href="#g49" x="168" y="208"/><use href="#g52" x="176" y="208"/><use href="#g45" x="184" y="208"/><use href="#g56" x="192" y="208"/><use href="#g48" x="200" y="208"/><use href="#g99" x="208" y="208"/><use href="#g55" x="216" y="208"/><use href="#g45" x="224" y="208"/><use href="#g102" x="232" y="208"/><use href="#g55" x="240" y="208"/><use href="#g100" x="248" y="208"/><use href="#g97" x="256" y="208"/><use href="#g57" x="264" y="208"/><use href="#g54" x="272" y="208"/><use href="#g50" x="280" y="208"/><use href="#g56" x="288" y="208"/><use href="#g49" x="296" y="208"/><use href="#g49" x="304" y="208"/><use href="#g101" x="312" y="208"/><use href="#g102" x="320" y="208"/><use href="#g47" x="336" y="208"/><use href="#g98" x="344" y="208"/><use href="#g111" x="352" y="208"/><use href="#g111" x="360" y="208"/><use href="#g116" x="368" y="208"/><use href="#g120" x="528" y="208"/><use href="#g102" x="536" y="208"/><use href="#g115" x="544" y="208"/><use href="#g100" x="592" y="208"/><use href="#g101" x="600" y="208"/><use href="#g102" x="608" y="208"/><use href="#g97" x="616" y="208"/><use href="#g117" x="624" y="208"/><use href="#g108" x="632" y="208"/><use href="#g116" x="640" y="208"/><use href="#g115" x="648" y="208"/><use href="#g48" x="720" y="208"/><use href="#g48" x="736" y="208"/><use href="#g47" x="0" y="224"/><use href="#g100" x="8" y="224"/><use href="#g101" x="16" y="224"/><use href="#g118" x="24" y="224"/><use href="#g47" x="32" y="224"/><use href="#g109" x="40" y="224"/><use href="#g97" x="48" y="224"/><use href="#g112" x="56" y="224"/><use href="#g112" x="64" y="224"/><use href="#g101" x="72" y="224"/><use href="#g114" x="80" y="224"/><use href="#g47" x="88" y="224"/><use href="#g114" x="96" y="224"/><use href="#g108" x="104" y="224"/><use href="#g109" x="112" y="224"/><use href="#g45" x="120" y="224"/><use href="#g115" x="128" y="224"/><use href="#g119" x="136" y="224"/><use href="#g97" x="144" y="224"/><use href="#g112" x="152" y="224"/><use href="#g110" x="192" y="224"/><use href="#g111" x="200" y="224"/><use href="#g110" x="208" y="224"/><use href="#g101" x="216" y="224"/><use href="#g115" x="384" y="224"/><use href="#g119" x="392" y="224"/><use href="#g97" x="400" y="224"/><use href="#g112" x="408" y="224"/><use href="#g100" x="448" y="224"/><use href="#g101" x="456" y="224"/><use href="#g102" x="464" y="224"/><use href="#g97" x="472" y="224"/><use href="#g117" x="480" y="224"/><use href="#g108" x="488" y="224"/><use href="#g116" x="496" y="224"/><use href="#g115" x="504" y="224"/><use href="#g48" x="576" y="224"/><use href="#g48" x="592" y="224"/><use href="#g85" x="0" y="240"/><use href="#g85" x="8" y="240"/><use href="#g73" x="16" y="240"/><use href="#g68" x="24" y="240"/><use href="#g61" x="32" y="240"/><use href="#g68" x="40" y="240"/><use href="#g69" x="48" y="240"/><use href="#g65" x="56" y="240"/><use href="#g68" x="64" y="240"/><use href="#g45" x="72" y="240"/><use href="#g66" x="80" y="240"/><use href="#g69" x="88" y="240"/><use href="#g69" x="96" y="240"/><use href="#g70" x="104" y="240"/><use href="#g47" x="192" y="240"/><use href="#g98" x="200" y="240"/><use href="#g114" x="208" y="240"/><use href="#g111" x="216" y="240"/><use href="#g107" x="224" y="240"/><use href="#g101" x="232" y="240"/><use href="#g110" x="240" y="240"/><use href="#g109" x="248" y="240"/><use href="#g111" x="256" y="240"/><use href="#g117" x="264" y="240"/><use href="#g110" x="272" y="240"/><use href="#g116" x="280" y="240"/><use href="#g120" x="384" y="240"/><use href="#g102" x="392" y="240"/><use href="#g115" x="400" y="240"/><use href="#g100" x="512" y="240"/><use href="#g101" x="520" y="240"/><use href="#g102" x="528" y="240"/><use href="#g97" x="536" y="240"/><use href="#g117" x="544" y="240"/><use href="#g108" x="552" y="240"/><use href="#g116" x="560" y="240"/><use href="#g115" x="568" y="240"/><use href="#g48" x="640" y="240"/><use href="#g48" x="656" y="240"/><use href="#g72" x="24" y="768"/><use href="#g101" x="32" y="768"/><use href="#g108" x="40" y="768"/><use href="#g112" x="48" y="768"/><use href="#g87" x="152" y="768"/><use href="#g114" x="160" y="768"/><use href="#g105" x="168" y="768"/><use href="#g116" x="176" y="768"/><use href="#g101" x="184" y="768"/><use href="#g79" x="200" y="768"/><use href="#g117" x="208" y="768"/><use href="#g116" x="216" y="768"/><use href="#g87" x="280" y="768"/><use href="#g104" x="288" y="768"/><use href="#g101" x="296" y="768"/><use href="#g114" x="304" y="768"/><use href="#g101" x="312" y="768"/><use href="#g73" x="328" y="768"/><use href="#g115" x="336" y="768"/><use href="#g67" x="408" y="768"/><use href="#g117" x="416" y="768"/><use href="#g116" x="424" y="768"/><use href="#g69" x="536" y="768"/><use href="#g120" x="544" y="768"/><use href="#g101" x="552" y="768"/><use href="#g99" x="560" y="768"/><use href="#g117" x="568" y="768"/><use href="#g116" x="576" y="768"/><use href="#g101" x="584" y="768"/><use href="#g76" x="664" y="768"/><use href="#g111" x="672" y="768"/><use href="#g99" x="680" y="768"/><use href="#g97" x="688" y="768"/><use href="#g116" x="696" y="768"/><use href="#g105" x="704" y="768"/><use href="#g111" x="712" y="768"/><use href="#g110" x="720" y="768"/><use href="#g85" x="800" y="768"/><use href="#g110" x="808" y="768"/><use href="#g100" x="816" y="768"/><use href="#g111" x="824" y="768"/><use href="#g83" x="928" y="768"/><use href="#g101" x="936" y="768"/><use href="#g116" x="944" y="768"/><use href="#g77" x="960" y="768"/><use href="#g97" x="968" y="768"/><use href="#g114" x="976" y="768"/><use href="#g107" x="984" y="768"/><use href="#g84" x="1056" y="768"/><use href="#g111" x="1064" y="768"/><use href="#g66" x="1080" y="768"/><use href="#g114" x="1088" y="768"/><use href="#g97" x="1096" y="768"/><use href="#g99" x="1104" y="768"/><use href="#g107" x="1112" y="768"/><use href="#g101" x="1120" y="768"/><use href="#g116" x="1128" y="768"/><use href="#g80" x="1184" y="768"/><use href="#g114" x="1192" y="768"/><use href="#g101" x="1200" y="768"/><use href="#g118" x="1208" y="768"/><use href="#g105" x="1216" y="768"/><use href="#g111" x="1224" y="768"/><use href="#g117" x="1232" y="768"/><use href="#g115" x="1240" y="768"/><use href="#g69" x="24" y="784"/><use href="#g120" x="32" y="784"/><use href="#g105" x="40" y="784"/><use href="#g116" x="48" y="784"/><use href="#g82" x="152" y="784"/><use href="#g101" x="160" y="784"/><use href="#g97" x="168" y="784"/><use href="#g100" x="176" y="784"/><use href="#g70" x="192" y="784"/><use href="#g105" x="200" y="784"/><use href="#g108" x="208" y="784"/><use href="#g101" x="216" y="784"/><use href="#g82" x="280" y="784"/><use href="#g101" x="288" y="784"/><use href="#g112" x="296" y="784"/><use href="#g108" x="304" y="784"/><use href="#g97" x="312" y="784"/><use href="#g99" x="320" y="784"/><use href="#g101" x="328" y="784"/><use href="#g80" x="408" y="784"/><use href="#g97" x="416" y="784"/><use href="#g115" x="424" y="784"/><use href="#g116" x="432" y="784"/><use href="#g101" x="440" y="784"/><use href="#g74" x="536" y="784"/><use href="#g117" x="544" y="784"/><use href="#g115" x="552" y="784"/><use href="#g116" x="560" y="784"/><use href="#g105" x="568" y="784"/><use href="#g102" x="576" y="784"/><use href="#g121" x="584" y="784"/><use href="#g71" x="664" y="784"/><use href="#g111" x="672" y="784"/><use href="#g84" x="688" y="784"/><use href="#g111" x="696" y="784"/><use href="#g76" x="712" y="784"/><use href="#g105" x="720" y="784"/><use href="#g110" x="728" y="784"/><use href="#g101" x="736" y="784"/><use href="#g82" x="800" y="784"/><use href="#g101" x="808" y="784"/><use href="#g100" x="816" y="784"/><use href="#g111" x="824" y="784"/><use href="#g67" x="928" y="784"/><use href="#g111" x="936" y="784"/><use href="#g112" x="944" y="784"/><use href="#g121" x="952" y="784"/><use href="#g87" x="1048" y="784"/><use href="#g104" x="1056" y="784"/><use href="#g101" x="1064" y="784"/><use href="#g114" x="1072" y="784"/><use href="#g101" x="1080" y="784"/><use href="#g87" x="1096" y="784"/><use href="#g97" x="1104" y="784"/><use href="#g115" x="1112" y="784"/><use href="#g78" x="1184" y="784"/><use href="#g101" x="1192" y="784"/><use href="#g120" x="1200" y="784"/><use href="#g116" x="1208" y="784"/></g></svg>
<svg style="position:absolute;left:0;top:0" width="1262" height="130" viewBox="0 0 1262 130">
<defs>
<linearGradient id="scr" x1="0" y1="0" x2="1" y2="1"><stop offset="0" stop-color="#b4bac4"/><stop offset="0.55" stop-color="#4d5d73"/><stop offset="1" stop-color="#34445c"/></linearGradient>
<linearGradient id="bez" x1="0" y1="0" x2="0" y2="1"><stop offset="0" stop-color="#f4f4f4"/><stop offset="0.8" stop-color="#ffffff"/><stop offset="1" stop-color="#d8d8d8"/></linearGradient>
</defs>
<!-- underlines -->
<g fill="#1f2426"><rect x="34" y="81" width="9" height="2"/><rect x="126" y="81" width="13" height="2"/><rect x="202" y="81" width="10" height="2"/><rect x="292" y="81" width="9" height="2"/></g>
<!-- close -->
<path d="M1215 38L1221 44M1221 38L1215 44" stroke="#2e3436" stroke-width="2.1" stroke-linecap="round" fill="none"/>
<!-- selected button -->
<rect x="30" y="91" width="42" height="34" rx="5" fill="#ccc6c1"/><rect x="30" y="91" width="42" height="33" rx="5" fill="#d7d2ce"/>
<!-- monitor -->
<rect x="40.6" y="99.6" width="20.8" height="14.6" rx="1.8" fill="url(#bez)" stroke="#7c7c7c" stroke-width="1"/>
<rect x="42.6" y="101.6" width="16.8" height="8.8" rx="1.2" fill="url(#scr)" stroke="#2f3f58" stroke-width="1"/>
<rect x="47.2" y="114.5" width="7.6" height="1.4" fill="#505050"/>
<path d="M45 116.1H57L57.8 117.9H44.2Z" fill="#7a7a7a"/>
<!-- bulb -->
<path fill-rule="evenodd" fill="#2e3436" d="M89.5 112.8A9 9 0 1 1 98.5 112.8V114.5Q98.5 115.5 97.5 115.5H90.5Q89.5 115.5 89.5 114.5Z M91.5 110.4A6 6 0 1 1 96.5 110.4L94.8 112.4H93.2Z"/>
<path d="M91 117H97V118.6Q97 119.8 95.8 119.8H92.2Q91 119.8 91 118.6Z" fill="#2e3436"/>
<path d="M92.5 105.5L94 107L95.5 105.5" stroke="#a4a6a6" stroke-width="1.5" fill="none" stroke-linecap="round"/>
<!-- separators -->
<rect x="122.2" y="91" width="1" height="34" fill="#dcd9d5"/>
<rect x="301" y="91" width="1" height="34" fill="#dcd9d5"/>
<!-- play -->
<path d="M142.2 99.6Q142.2 97 144.5 98.2L159.8 106.2Q161.9 107.75 159.8 109.3L144.5 117.3Q142.2 118.5 142.2 115.9Z" fill="#919695"/>
<!-- pause -->
<rect x="185" y="97.5" width="7.1" height="20.9" rx="1.3" fill="#2e3436"/>
<rect x="195.7" y="97.5" width="7.2" height="20.9" rx="1.3" fill="#2e3436"/>
<!-- power -->
<path d="M232.8 99.9A9.2 9.2 0 1 0 241.2 99.9" stroke="#2e3436" stroke-width="2.85" fill="none" stroke-linecap="round"/>
<path d="M237 97.6V104.6" stroke="#2e3436" stroke-width="2.85" stroke-linecap="round"/>
<!-- chevron -->
<path d="M271.9 107L276 111.1L280.1 107" stroke="#2e3436" stroke-width="2.3" fill="none" stroke-linecap="round" stroke-linejoin="round"/>
<!-- double monitor -->
<rect x="320.6" y="98.5" width="15.8" height="11.5" rx="1.5" fill="url(#bez)" stroke="#7c7c7c" stroke-width="1"/>
<rect x="322.3" y="100.2" width="12.4" height="7.6" rx="1" fill="url(#scr)" stroke="#2f3f58" stroke-width="1"/>
<rect x="324.5" y="104.7" width="16" height="11.5" rx="1.5" fill="url(#bez)" stroke="#7c7c7c" stroke-width="1"/>
<rect x="326.2" y="106.4" width="12.6" height="7.4" rx="1" fill="url(#scr)" stroke="#2f3f58" stroke-width="1"/>
<path d="M330.2 108.3L334.6 110.1L330.2 111.9Z" fill="#ffffff"/>
<path d="M329 117.1H336.3L337 118.8H328.3Z" fill="#8a8a8a"/>
<!-- fullscreen -->
<path d="M1216.5 98.2H1221.55V103.3Z" fill="#2e3436"/>
<path d="M1205.3 118H1200.3V113Z" fill="#2e3436"/>
<path d="M1213.5 97.45H1221.55V105" stroke="#2e3436" stroke-width="2.5" fill="none" stroke-linecap="round" stroke-linejoin="miter"/>
<path d="M1214.4 105.4L1220.3 99.5" stroke="#2e3436" stroke-width="2.5" stroke-linecap="round"/>
<path d="M1200.3 110.5V118.45H1208.3" stroke="#2e3436" stroke-width="2.5" fill="none" stroke-linecap="round" stroke-linejoin="miter"/>
<path d="M1202 117L1207.9 111.1" stroke="#2e3436" stroke-width="2.5" stroke-linecap="round"/>
</svg>

</body></html>
